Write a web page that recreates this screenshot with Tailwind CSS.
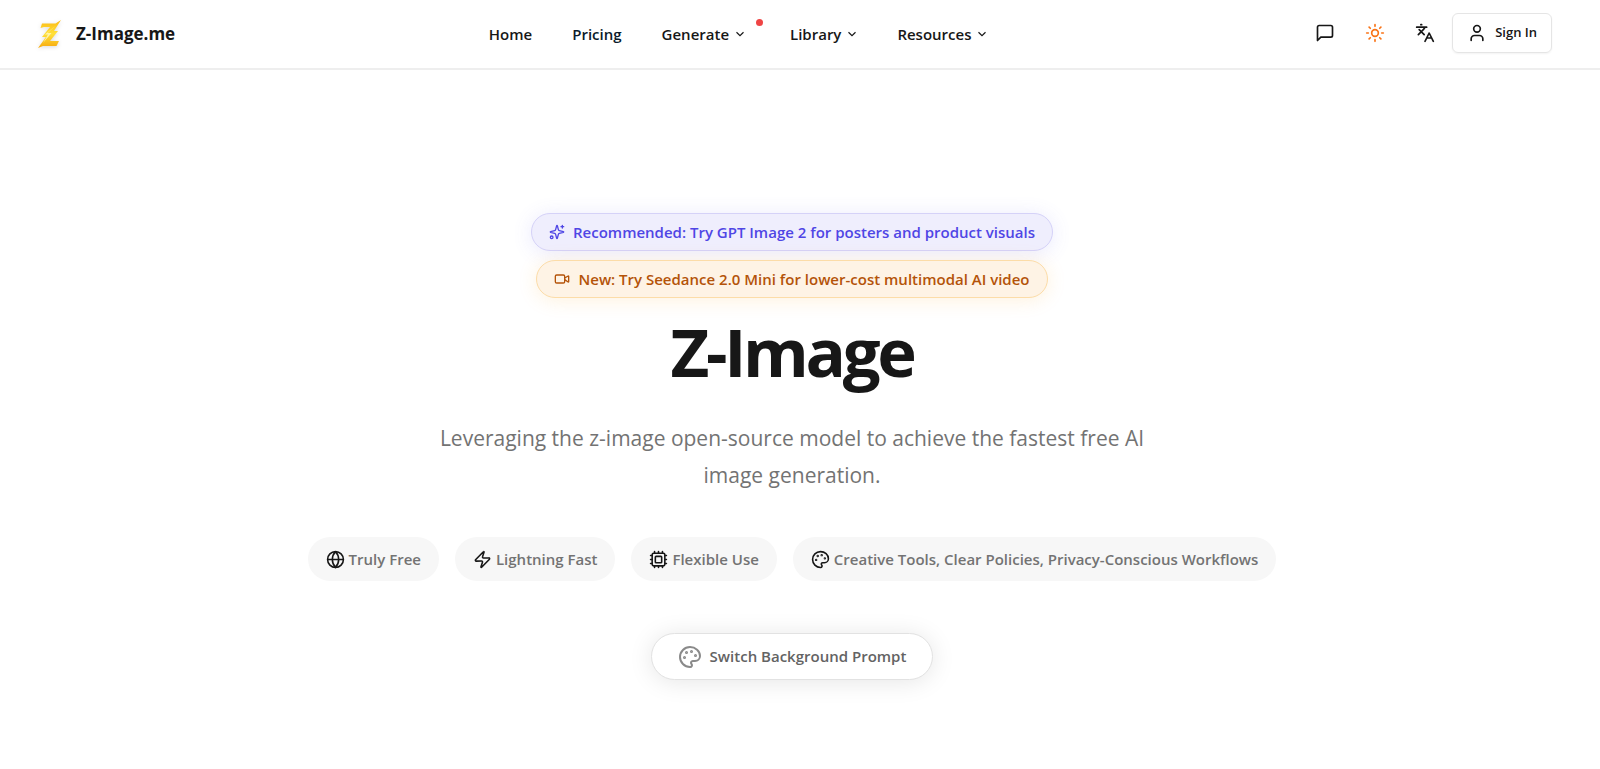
<!DOCTYPE html>
<html lang="en">
<head>
<meta charset="utf-8">
<meta name="viewport" content="width=device-width, initial-scale=1">
<title>Z-Image.me</title>
<script src="https://cdn.jsdelivr.net/npm/@tailwindcss/browser@4"></script>
</head>
<body class="min-h-screen bg-white font-['Open_Sans',sans-serif] text-[#171717]">
<svg class="hidden" fill="none">
  <symbol id="chevron" viewBox="0 0 24 24"><path d="m6 9 6 6 6-6"/></symbol>
  <symbol id="palette" viewBox="0 0 24 24"><path d="M12 22a1 1 0 0 1 0-20 10 9 0 0 1 10 9 5 5 0 0 1-5 5h-2.25a1.75 1.75 0 0 0-1.4 2.8l.3.4a1.75 1.75 0 0 1-1.4 2.8z"/><g fill="currentColor"><circle cx="13.5" cy="6.5" r=".5"/><circle cx="17.5" cy="10.5" r=".5"/><circle cx="6.5" cy="12.5" r=".5"/><circle cx="8.5" cy="7.5" r=".5"/></g></symbol>
</svg>
<header class="flex h-[70px] items-center justify-between border-b-2 border-[#eeeeee] pr-12 pl-9">
  <a href="#" class="flex items-center gap-3 text-[17px] font-bold">
    <svg class="size-7 drop-shadow-sm" viewBox="0 0 28 28">
      <defs><linearGradient id="gold" x1="0" y1="0" x2="0" y2="1"><stop stop-color="#fbb913"/><stop offset=".5" stop-color="#ffe13a"/><stop offset="1" stop-color="#f7a90d"/></linearGradient></defs>
      <path fill="url(#gold)" d="M6 3.500h13.500L25 0l-7 11h4l-8 10h9l-2.500 5H7l-5 2 8-11H6l8-10H8L4.500 8z"/>
      <path fill="#fff3a8" d="m20.500 5-9 8h4l-8.500 10 5-8.500H9z"/>
    </svg>
    <span>Z-Image.me</span>
  </a>
  <nav class="flex items-center text-[15px] font-semibold" aria-label="Main">
    <a href="#" class="px-5">Home</a>
    <a href="#" class="px-5 text-[#0b1b2b]">Pricing</a>
    <button class="relative flex items-center gap-1 pr-6 pl-5">Generate<svg class="size-3.5 fill-none stroke-current stroke-2"><use href="#chevron"/></svg><span class="absolute -top-1 right-2 size-[7px] rounded-full bg-[#ef4444]"></span></button>
    <button class="flex items-center gap-1 px-[19px]">Library<svg class="size-3.5 fill-none stroke-current stroke-2"><use href="#chevron"/></svg></button>
    <button class="flex items-center gap-1 px-[19px]">Resources<svg class="size-3.5 fill-none stroke-current stroke-2"><use href="#chevron"/></svg></button>
  </nav>
  <div class="flex items-center justify-end gap-1 pb-0.5">
    <button class="grid h-10 w-[46px] place-items-center" aria-label="Feedback"><svg class="size-5 fill-none stroke-current stroke-2" viewBox="0 0 24 24" stroke-linecap="round" stroke-linejoin="round"><path d="M21 15a2 2 0 0 1-2 2H7l-4 4V5a2 2 0 0 1 2-2h14a2 2 0 0 1 2 2z"/></svg></button>
    <button class="grid h-10 w-[46px] place-items-center text-[#f97316]" aria-label="Theme"><svg class="size-5 fill-none stroke-current stroke-2" viewBox="0 0 24 24" stroke-linecap="round"><circle cx="12" cy="12" r="4"/><path d="M12 2v2M12 20v2M4.93 4.93l1.41 1.41M17.66 17.66l1.41 1.41M2 12h2M20 12h2M6.34 17.66l-1.41 1.41M19.07 4.93l-1.41 1.41"/></svg></button>
    <button class="grid h-10 w-[46px] place-items-center" aria-label="Language"><svg class="size-5 fill-none stroke-current stroke-2" viewBox="0 0 24 24" stroke-linecap="round" stroke-linejoin="round"><path d="m5 8 6 6M4 14l6-6 2-3M2 5h12M7 2h1M22 22l-5-10-5 10M14 18h6"/></svg></button>
    <button class="flex h-10 items-center gap-2 rounded-md border border-[#e5e5e5] px-3.5 text-[13px] font-semibold shadow-xs"><svg class="size-5 fill-none stroke-current stroke-2" viewBox="0 0 24 24" stroke-linecap="round" stroke-linejoin="round"><path d="M19 21v-2a4 4 0 0 0-4-4H9a4 4 0 0 0-4 4v2"/><circle cx="12" cy="7" r="4"/></svg>Sign In</button>
  </div>
</header>
<main class="flex flex-col items-center pt-[143px] pr-4 text-center text-[15px] font-semibold">
  <a href="#" class="flex h-[38px] items-center gap-2 rounded-full border border-[#d5d2f8] bg-[#efeefd] px-[17px] text-[#4f46e5] shadow-[0_2px_20px_rgba(99,102,241,0.14)]">
    <svg class="size-4 fill-none stroke-current stroke-2" viewBox="0 0 24 24" stroke-linecap="round" stroke-linejoin="round"><path d="M9.94 15.5A2 2 0 0 0 8.5 14.06l-6.14-1.58a.5.5 0 0 1 0-.96L8.5 9.94A2 2 0 0 0 9.94 8.5l1.58-6.14a.5.5 0 0 1 .96 0l1.58 6.14a2 2 0 0 0 1.44 1.44l6.14 1.58a.5.5 0 0 1 0 .96l-6.14 1.58a2 2 0 0 0-1.44 1.44l-1.58 6.14a.5.5 0 0 1-.96 0zM20 2v4M22 4h-4"/><circle cx="4" cy="20" r="2"/></svg>
    Recommended: Try GPT Image 2 for posters and product visuals</a>
  <a href="#" class="mt-[9px] flex h-[38px] items-center gap-2 rounded-full border border-[#fcdca8] bg-[#fef3e5] px-[17px] text-[#b45309] shadow-[0_2px_20px_rgba(245,158,11,0.14)]">
    <svg class="size-4 fill-none stroke-current stroke-2" viewBox="0 0 24 24" stroke-linecap="round" stroke-linejoin="round"><path d="m16 13 5.22 3.48a.5.5 0 0 0 .78-.41V7.87a.5.5 0 0 0-.75-.43L16 10.5"/><rect x="2" y="6" width="14" height="12" rx="2"/></svg>
    New: Try Seedance 2.0 Mini for lower-cost multimodal AI video</a>
  <h1 class="mt-[17px] text-[67px] leading-[72px] font-bold tracking-tighter">Z-Image</h1>
  <p class="mt-[33px] max-w-3xl px-4 text-[21px] leading-[37px] font-normal text-[#737373]">Leveraging the z-image open-source model to achieve the fastest free AI image generation.</p>
  <ul class="mt-[43px] flex flex-wrap justify-center gap-4 text-[#737373]">
    <li class="flex h-11 items-center gap-1 rounded-full bg-[#f7f7f7] px-[18px]"><svg class="size-[19px] fill-none stroke-[#171717] stroke-2" viewBox="0 0 24 24"><circle cx="12" cy="12" r="10"/><path d="M12 2a14.5 14.5 0 0 0 0 20 14.5 14.5 0 0 0 0-20M2 12h20"/></svg>Truly Free</li>
    <li class="flex h-11 items-center gap-1 rounded-full bg-[#f7f7f7] px-[18px]"><svg class="size-[19px] fill-none stroke-[#171717] stroke-2" viewBox="0 0 24 24" stroke-linejoin="round"><path d="M4 14a1 1 0 0 1-.78-1.63l9.9-10.2a.5.5 0 0 1 .86.46l-1.92 6.02A1 1 0 0 0 13 10h7a1 1 0 0 1 .78 1.63l-9.9 10.2a.5.5 0 0 1-.86-.46l1.92-6.02A1 1 0 0 0 11 14z"/></svg>Lightning Fast</li>
    <li class="flex h-11 items-center gap-1 rounded-full bg-[#f7f7f7] px-[18px]"><svg class="size-[19px] fill-none stroke-[#171717] stroke-2" viewBox="0 0 24 24" stroke-linecap="round"><rect x="4" y="4" width="16" height="16" rx="2"/><rect x="8" y="8" width="8" height="8" rx="1"/><path d="M12 20v2M12 2v2M17 20v2M17 2v2M2 12h2M2 17h2M2 7h2M20 12h2M20 17h2M20 7h2M7 20v2M7 2v2"/></svg>Flexible Use</li>
    <li class="flex h-11 items-center gap-1 rounded-full bg-[#f7f7f7] px-[18px]"><svg class="size-[19px] fill-none stroke-[#171717] stroke-2 text-[#171717]"><use href="#palette"/></svg>Creative Tools, Clear Policies, Privacy-Conscious Workflows</li>
  </ul>
  <button class="mt-[52px] flex h-[47px] items-center gap-2 rounded-full border border-[#e2e2e2] bg-white px-[26px] text-[#636363] shadow-[0_2px_24px_rgba(0,0,0,0.1)]"><svg class="size-6 fill-none stroke-[#8a8a8a] stroke-2 text-[#8a8a8a]"><use href="#palette"/></svg>Switch Background Prompt</button>
</main>
</body>
</html>
